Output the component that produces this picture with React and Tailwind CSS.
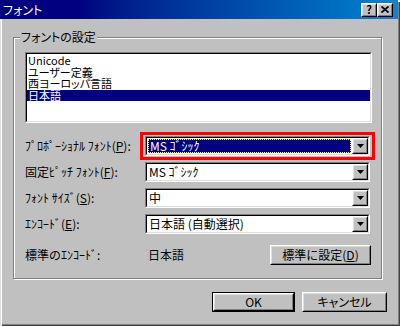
import React from 'react';

const FONT = "[font-family:'Noto_Sans_CJK_JP',sans-serif]";

// Win9x style 3D borders
const Sunken = ({ className = '', innerClass = '', children }) => (
  <div className={`border border-t-[#808080] border-l-[#808080] border-r-white border-b-white ${className}`}>
    <div className={`h-full border border-t-black border-l-black border-r-[#dfdfdf] border-b-[#dfdfdf] ${innerClass}`}>
      {children}
    </div>
  </div>
);

const Raised = ({ className = '', innerClass = '', children }) => (
  <div className={`border border-t-white border-l-white border-r-black border-b-black bg-[#c0c0c0] ${className}`}>
    <div className={`h-full border border-t-[#dfdfdf] border-l-[#dfdfdf] border-r-[#808080] border-b-[#808080] flex items-center justify-center ${innerClass}`}>
      {children}
    </div>
  </div>
);

const Arrow = () => (
  <svg width="7" height="4" viewBox="0 0 7 4">
    <polygon points="0,0 7,0 3.5,4" fill="#000" />
  </svg>
);

const Combo = ({ value, focused }) => (
  <Sunken className="w-[225px] h-[20px]" innerClass="flex bg-white">
    {focused ? (
      <div className="flex-1 m-[1px] bg-[#000080] border border-dotted border-[#ffff80] flex items-center pl-[1px] text-white leading-none">
        {value}
      </div>
    ) : (
      <div className="flex-1 flex items-center pl-[2px] leading-none">{value}</div>
    )}
    <Raised className="w-[16px] h-full">
      <Arrow />
    </Raised>
  </Sunken>
);

const LIST = ['Unicode', 'ユーザー定義', '西ヨーロッパ言語', '日本語'];

const ROWS = [
  { label: 'ﾌﾟﾛﾎﾟｰｼｮﾅﾙ ﾌｫﾝﾄ(', key: 'P', value: 'MS ｺﾞｼｯｸ', focused: true },
  { label: '固定ﾋﾟｯﾁ ﾌｫﾝﾄ(', key: 'F', value: 'MS ｺﾞｼｯｸ' },
  { label: 'ﾌｫﾝﾄ ｻｲｽﾞ(', key: 'S', value: '中' },
  { label: 'ｴﾝｺｰﾄﾞ(', key: 'E', value: '日本語 (自動選択)' },
];

export default function App() {
  return (
    <div
      className={`w-[400px] h-[326px] bg-[#c0c0c0] flex flex-col text-[12px] text-black ${FONT} shadow-[inset_1px_1px_0_#dfdfdf,inset_2px_2px_0_#fff,inset_-1px_-1px_0_#404040,inset_-2px_-2px_0_#808080]`}
    >
      {/* title bar */}
      <div className="h-[19px] mr-[2px] flex items-center bg-linear-to-r from-[#000080] from-20% to-[#1084d0] pl-[3px] pr-[5px]">
        <span className="text-white text-[12px] leading-none [font-feature-settings:'palt']">フォント</span>
        <div className="ml-auto flex">
          <Raised className="w-[16px] h-[14px]">
            <span className="text-[11px] font-bold leading-none">?</span>
          </Raised>
          <Raised className="w-[16px] h-[14px]">
            <svg width="8" height="7" viewBox="0 0 8 7">
              <path d="M0.5 0.5 L7.5 6.5 M7.5 0.5 L0.5 6.5" stroke="#000" strokeWidth="1.8" />
            </svg>
          </Raised>
        </div>
      </div>

      {/* settings group */}
      <div className="pl-[13px] mt-[18px]">
        <div className="relative w-[369px] h-[242px] border border-[#808080] shadow-[inset_1px_1px_0_#fff,1px_1px_0_#fff] pl-[11px] pt-[14px]">
          <span className="absolute left-[6px] -top-[8px] px-[1px] bg-[#c0c0c0] leading-[14px] [font-feature-settings:'palt']">
            フォントの設定
          </span>

          <Sunken className="w-[347px] h-[71px]" innerClass="bg-white pt-[1px]">
            {LIST.map((item, i) => (
              <div
                key={item}
                className={`h-[11.5px] text-[11px] leading-[11.5px] pl-[1px] [font-feature-settings:'palt'] ${i === 3 ? 'bg-[#000080] text-white' : ''}`}
              >
                {item}
              </div>
            ))}
          </Sunken>

          <div className="mt-[13px] flex flex-col gap-[6px]">
            {ROWS.map((r) => (
              <div key={r.key} className="flex items-center h-[20px]">
                <span className="w-[120px] leading-none">
                  {r.label}
                  <span className="underline">{r.key}</span>):
                </span>
                <div className="relative">
                  {r.focused && (
                    <div className="absolute -left-[5px] -right-[5px] -top-[4px] -bottom-[4px] border-[3px] border-[#ff0000]" />
                  )}
                  <Combo value={r.value} focused={r.focused} />
                </div>
              </div>
            ))}
          </div>

          <div className="mt-[11px] w-[347px] flex items-center h-[20px]">
            <span className="w-[120px] leading-none">標準のｴﾝｺｰﾄﾞ:</span>
            <span className="pl-[3px] leading-none">日本語</span>
            <Raised className="ml-auto mr-[1px] w-[101px] h-[20px]">
              <span className="leading-none">
                標準に設定(<span className="underline">D</span>)
              </span>
            </Raised>
          </div>
        </div>
      </div>

      {/* dialog buttons */}
      <div className="mt-[13px] flex justify-end gap-[7px] pr-[13px]">
        <div className="border border-black">
          <Raised className="w-[81px] h-[18px]">
            <span className="leading-none">OK</span>
          </Raised>
        </div>
        <Raised className="w-[85px] h-[20px]">
          <span className="leading-none [font-feature-settings:'palt']">キャンセル</span>
        </Raised>
      </div>
    </div>
  );
}
